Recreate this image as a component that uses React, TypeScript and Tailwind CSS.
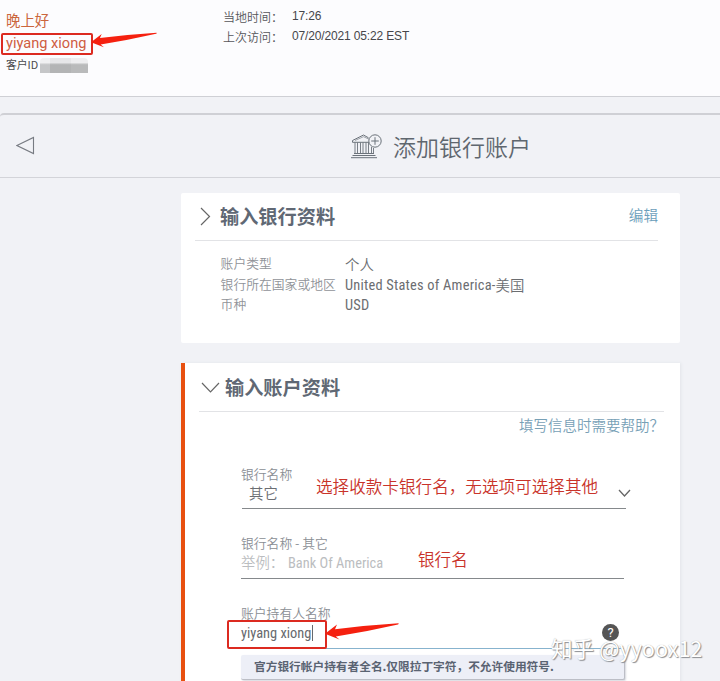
import type { ReactNode } from 'react'
import clsx from 'clsx'

const accountRows = [
  { label: '账户类型', value: '个人' },
  { label: '银行所在国家或地区', value: 'United States of America-', suffix: '美国' },
  { label: '币种', value: 'USD' },
]

function Arrow({ className }: { className?: string }) {
  return (
    <svg viewBox="0 0 74 20" className={clsx('absolute', className)} fill="#f5200f">
      <path d="M0 10.8 L12 1.5 L10 6.2 Q41 2.2 73.5 0.2 Q74 1.2 73 1.4 Q42 8.5 10.8 13.4 L14.5 16.5 Z" />
    </svg>
  )
}

function BankIcon() {
  return (
    <svg width="31" height="25" viewBox="0 0 31 25" fill="none" stroke="#6b727a" strokeWidth="1">
      <path d="M17.5 3.8 L12.5 1 L1.5 6.5 V8.3 H19" />
      <path d="M4 6.5 L12.5 2.7 L18 5.2" strokeWidth="0.6" />
      <path d="M4 8.5V19M6.5 8.5V19M9.5 8.5V19M12 8.5V19M15 8.5V19M17.5 8.5V19M20.5 13V19M22.5 14V19" strokeWidth="0.9" />
      <path d="M3 19.5H23M1.5 21.5H24.5M0 23.7H26" />
      <circle cx="24" cy="7" r="6.2" fill="#f1f2f6" />
      <path d="M24 3.2V10.8M20.2 7H27.8" />
    </svg>
  )
}

function Condensed({ children, className }: { children: ReactNode; className?: string }) {
  return (
    <span className={clsx("mt-px font-['Roboto_Condensed','Roboto',sans-serif] font-normal whitespace-nowrap", className)}>
      {children}
    </span>
  )
}

function TopBar() {
  return (
    <header className="flex h-[97px] border-b border-[#cfd0d5] bg-[#fcfcfe]">
      <div className="w-[223px] pt-[10px] pl-[6px]">
        <p className="h-5 text-[14.4px] leading-5 font-normal text-[#cb663c]">晚上好</p>
        <div className="relative mt-[3px] -ml-[5px] h-[22px] w-[92px] rounded-[2px] border-2 border-[#dc2a20] pl-[3px] font-['Roboto',sans-serif] text-[14.6px] leading-[17px] font-normal whitespace-nowrap text-[#cf5c42]">
          yiyang xiong
          <Arrow className="top-[-3px] left-[88px] h-[19px] w-[66px]" />
        </div>
        <div className="mt-px flex h-[17px] items-center text-[10.8px] leading-[17px] font-normal text-[#4a4a4d]">
          <span>客户ID</span>
          <span className="mt-[1px] ml-[2px] flex h-[15px] w-[48px] overflow-hidden rounded-t-[4px]">
            <span className="w-[10px] bg-linear-to-b from-[#f0f0f2] from-30% to-[#c5c6c8] to-45%" />
            <span className="w-[21px] bg-linear-to-b from-[#e6e6e8] from-30% to-[#b3b4b5] to-45%" />
            <span className="w-[17px] bg-linear-to-b from-[#eeeef0] from-30% to-[#b9babb] to-45%" />
          </span>
        </div>
      </div>
      <dl className="grid auto-rows-[20px] grid-cols-[69px_auto] pt-[6px] text-xs leading-5 text-[#55555a]">
        <dt className="pt-px font-[350]">当地时间：</dt>
        <dd className="font-['Liberation_Sans',sans-serif] tracking-[-0.15px] text-[#46464a]">17:26</dd>
        <dt className="pt-px font-[350]">上次访问：</dt>
        <dd className="font-['Liberation_Sans',sans-serif] tracking-[-0.15px] text-[#46464a]">07/20/2021 05:22 EST</dd>
      </dl>
    </header>
  )
}

function TitleBar() {
  return (
    <div className="mt-4 flex h-[65px] items-center rounded-tl-[4px] border-t-2 border-b border-t-[#cfd0d5] border-b-[#d3d4d9] bg-[#f1f2f6]">
      <svg width="19" height="19" viewBox="0 0 19 19" className="-mt-px ml-4" fill="none" stroke="#777b82" strokeWidth="1.1">
        <path d="M0.9 9.5 L17.5 1.5 V17.5 Z" />
      </svg>
      <div className="ml-[316px] flex items-center gap-[11px]">
        <BankIcon />
        <h1 className="text-[23px] leading-8 font-[350] text-[#5f676f]">添加银行账户</h1>
      </div>
    </div>
  )
}

function BankCard() {
  return (
    <section className="h-[150px] rounded-[2px] bg-white pt-[11px] pr-[22px] pl-[14px]">
      <div className="flex h-[37px] border-b border-[#e2e3e6]">
        <svg width="11" height="19" viewBox="0 0 11 19" className="mt-[3px] ml-[5px]" fill="none" stroke="#666" strokeWidth="1.2">
          <path d="M1 1 L9.5 9.5 L1 18" />
        </svg>
        <h2 className="ml-[9px] flex-1 text-[19.2px] leading-6 font-bold text-[#606874]">输入银行资料</h2>
        <a className="text-[14.6px] leading-[22px] font-[350] text-[#6c9ebb]">编辑</a>
      </div>
      <dl className="mt-[12px] -ml-px grid auto-rows-[20.6px] grid-cols-[125px_auto] pl-[26px] leading-5">
        {accountRows.map(row => (
          <div key={row.label} className="contents">
            <dt className="pl-[0.6px] text-[12.8px] font-[350] whitespace-nowrap text-[#909398]">{row.label}</dt>
            <dd className="flex pt-px text-[14.4px] font-[350] whitespace-nowrap text-[#6b6d71]">
              {row.value === '个人' ? row.value : <Condensed className="tracking-[0.22px]">{row.value}</Condensed>}
              {row.suffix && <span>{row.suffix}</span>}
            </dd>
          </div>
        ))}
      </dl>
    </section>
  )
}

function Field({ label, className, children }: { label: string; className?: string; children: ReactNode }) {
  return (
    <div className={clsx('relative border-b', className)}>
      <p className="h-5 text-[12.8px] leading-5 font-[350] whitespace-nowrap text-[#8a8e94]">{label}</p>
      {children}
    </div>
  )
}

function AccountCard() {
  return (
    <section className="mt-5 h-[330px] border-l-4 border-[#e8500f] bg-white pt-3 pr-4 pl-[14px] shadow-[1px_0_3px_#e2e4e9]">
      <div className="flex h-[37px] border-b border-[#e2e3e6]">
        <svg width="20" height="12" viewBox="0 0 20 12" className="mt-[7px] ml-[2px]" fill="none" stroke="#666" strokeWidth="1.2">
          <path d="M1 1 L9.5 10 L18 1" />
        </svg>
        <h2 className="ml-[4px] text-[19.2px] leading-6 font-bold text-[#606874]">输入账户资料</h2>
      </div>
      <a className="mt-[2px] block text-right text-[14.5px] leading-[22px] font-[350] text-[#77a0b6]">填写信息时需要帮助？</a>

      <div className="pt-[28px] pl-[41px]">
        <Field label="银行名称" className="ml-[2px] h-[45px] w-[384px] border-[#85898c] [&>p:first-child]:-ml-px">
          <p className="-mt-px pl-[7px] text-[14.4px] leading-5 font-[350] text-[#6b6e73]">其它</p>
          <span className="absolute top-[10px] left-[74px] text-[16.6px] leading-6 font-[350] whitespace-nowrap text-[#c9332a]">
            选择收款卡银行名，无选项可选择其他
          </span>
          <svg width="13" height="9" viewBox="0 0 13 9" className="absolute top-[25px] right-[-5px]" fill="none" stroke="#666" strokeWidth="1.3">
            <path d="M1 1 L6.5 7 L12 1" />
          </svg>
        </Field>

        <Field label="银行名称 - 其它" className="mt-6 ml-px h-[46px] w-[383px] border-[#85898c]">
          <div className="flex text-[14.4px] leading-5 font-[350] text-[#bbbdc0]">
            <span className="-mt-px w-[47px] whitespace-nowrap">举例：</span>
            <Condensed>Bank Of America</Condensed>
          </div>
          <span className="absolute top-[14px] left-[177px] text-[16.6px] leading-6 font-[350] text-[#c9332a]">银行名</span>
        </Field>

        <Field label="账户持有人名称" className="mt-6 ml-px h-[46px] w-[383px] border-[#87b3ce]">
          <div className="flex text-[14.4px] leading-5 text-[#66696d]">
            <Condensed>yiyang xiong</Condensed>
          </div>
          <div className="absolute top-[17px] left-[-14px] h-[29px] w-[100px] rounded-[2px] border-2 border-[#dc2a20]">
            <span className="absolute top-[3px] left-[83px] h-4 w-px bg-[#66696d]" />
            <Arrow className="top-px left-[96px] h-[20px] w-[74px]" />
          </div>
          <span className="absolute top-[21px] right-[5px] h-[17px] w-[17px] rounded-full bg-[#555] text-center font-['Roboto',sans-serif] text-[13px] leading-[17px] font-normal text-white">
            ?
          </span>
        </Field>

        <div className="mt-[6px] ml-px h-[25px] w-[384px] rounded-[2px] border-r border-b border-[#bcbec6] bg-[#edeff7] pl-[13px] text-[11.7px] leading-[22px] font-bold whitespace-nowrap text-[#5a6372] shadow-[1px_1px_2px_#d5d7dd]">
          官方银行帐户持有者全名.仅限拉丁字符，不允许使用符号.
        </div>
      </div>
    </section>
  )
}

export default function App() {
  return (
    <div className="relative h-[681px] w-[720px] overflow-hidden bg-[#f1f2f6] font-['Noto_Sans_CJK_SC',sans-serif] font-light">
      <TopBar />
      <TitleBar />
      <main className="mt-[15px] ml-[181px] w-[499px]">
        <BankCard />
        <AccountCard />
      </main>
      <div className="absolute top-[634px] left-[551px] text-[21.6px] leading-7 font-normal whitespace-nowrap text-white [text-shadow:1px_1px_1px_#8b8d91,0_0_1px_#aaa]">
        知乎 @yyoox12
      </div>
    </div>
  )
}
